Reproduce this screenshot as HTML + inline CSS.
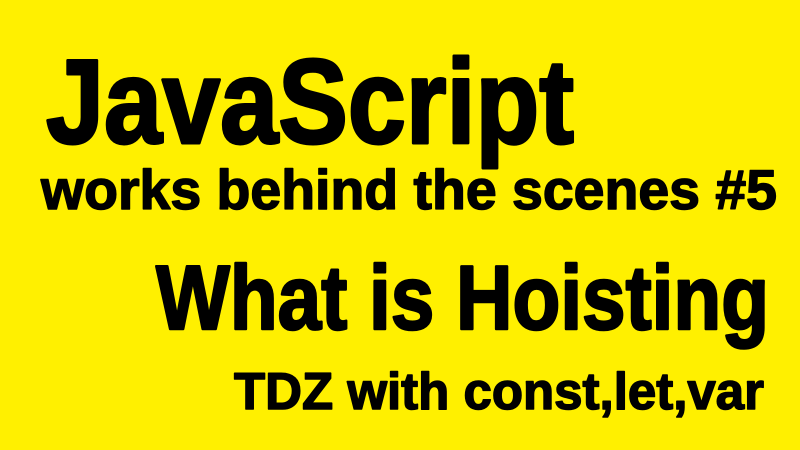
<!DOCTYPE html>
<html><head><meta charset="utf-8"><style>
html,body{margin:0;padding:0;background:#FFF000;}
svg{display:block}
text{font-family:"Liberation Sans","DejaVu Sans",sans-serif;font-weight:bold;fill:#000;stroke:#000;stroke-linejoin:round}
</style></head><body>
<svg width="800" height="450" viewBox="0 0 800 450" xmlns="http://www.w3.org/2000/svg">
<rect width="800" height="450" fill="#FFF000"/>
<text x="46" y="143" font-size="120" stroke-width="3" textLength="528" lengthAdjust="spacingAndGlyphs">JavaScript</text>
<text x="41" y="209" font-size="56" stroke-width="1.5" textLength="736" lengthAdjust="spacingAndGlyphs">works behind the scenes #5</text>
<text x="156" y="329" font-size="91" stroke-width="2.5" textLength="613" lengthAdjust="spacingAndGlyphs">What is Hoisting</text>
<text x="234" y="409" font-size="52" stroke-width="1.5" textLength="530" lengthAdjust="spacingAndGlyphs">TDZ with const,let,var</text>
</svg>
</body></html>
